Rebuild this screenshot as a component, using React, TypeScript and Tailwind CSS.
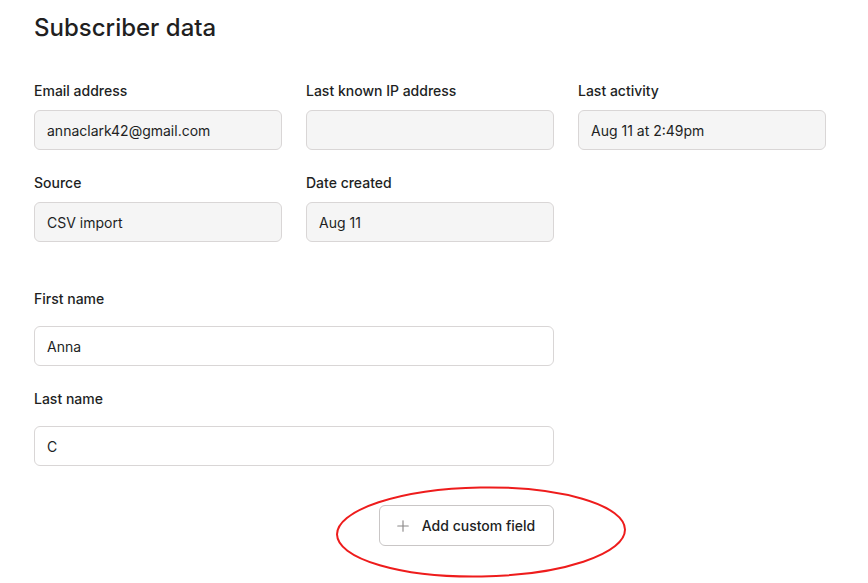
import { Plus } from 'lucide-react';

const font = { fontFamily: 'Inter, "Noto Sans", sans-serif' };

function ReadField({ label, value }: { label: string; value: string }) {
  return (
    <div className="flex flex-col">
      <label className="h-5 text-[14px] font-medium leading-5 text-[#221f1f]">{label}</label>
      <div className="mt-[9px] flex h-10 items-center rounded-md border border-[#d9d6d6] bg-[#f5f5f5] px-[12px] text-[14px] text-[#221f1f]">
        {value}
      </div>
    </div>
  );
}

function EditField({ label, value }: { label: string; value: string }) {
  return (
    <div className="flex flex-col">
      <label className="h-5 text-[14px] font-medium leading-5 text-[#221f1f]">{label}</label>
      <input
        defaultValue={value}
        className="mt-[17px] h-10 w-[520px] rounded-md border border-[#d9d6d6] bg-white px-[12px] text-[14px] text-[#221f1f] outline-none"
      />
    </div>
  );
}

export default function App() {
  return (
    <div className="relative h-[583px] w-[868px] overflow-hidden bg-white" style={font}>
      <div className="flex flex-col pl-[34px] pt-[12px]">
        <h1 className="h-8 text-[24px] font-medium leading-8 text-[#221f1f]">Subscriber data</h1>

        <div className="mt-[37px] grid w-[792px] grid-cols-3 gap-x-6 gap-y-[23px]">
          <ReadField label="Email address" value="annaclark42@gmail.com" />
          <ReadField label="Last known IP address" value="" />
          <ReadField label="Last activity" value="Aug 11 at 2:49pm" />
          <ReadField label="Source" value="CSV import" />
          <ReadField label="Date created" value="Aug 11" />
        </div>

        <div className="mt-[47px] flex flex-col gap-[23px]">
          <EditField label="First name" value="Anna" />
          <EditField label="Last name" value="C" />
        </div>

        <div className="mt-[39px] flex w-[520px] justify-end">
          <button className="flex h-[41px] w-[175px] items-center justify-center gap-[10px] rounded-md border border-[#c9c6c6] bg-white pr-1 text-[14px] font-medium text-[#221f1f]">
            <Plus size={18} strokeWidth={1.5} className="text-[#8a8787]" />
            Add custom field
          </button>
        </div>
      </div>

      <svg className="pointer-events-none absolute left-0 top-0" width="868" height="583">
        <ellipse
          cx="481"
          cy="532"
          rx="144"
          ry="44.5"
          transform="rotate(-1 481 532)"
          fill="none"
          stroke="#ee1c1c"
          strokeWidth="2"
        />
      </svg>
    </div>
  );
}
